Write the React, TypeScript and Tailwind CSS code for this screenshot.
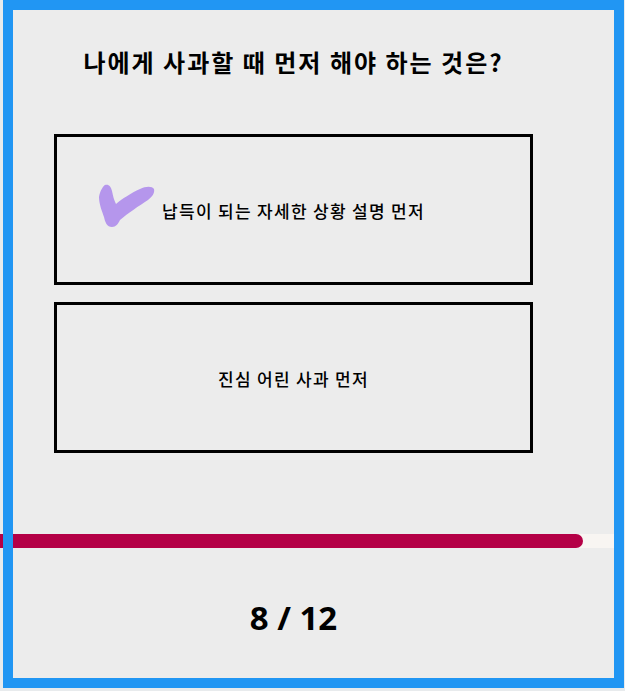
import React from "react";

const options = [
  { id: 1, label: "납득이 되는 자세한 상황 설명 먼저", checked: true },
  { id: 2, label: "진심 어린 사과 먼저", checked: false },
];

function BrushCheck() {
  return (
    <svg width="60" height="46" viewBox="0 0 60 46" className="absolute left-[40px] top-[46px]">
      <path
        d="M2 14 C3 8 6 3 8 2 C12 1 14 4 15 8 C16 13 17 17 19 21 C25 16 34 10 43 6 C49 3 55 3 57 6 C58 10 55 14 51 17 C42 23 31 30 23 37 C21 41 19 44 15 44 C10 44 8 39 7 34 C5 28 2 21 2 14 Z"
        fill="#b596ec"
      />
    </svg>
  );
}

export default function App() {
  return (
    <div className="min-h-screen bg-[#e8ebed] pl-[3px] pr-[1px] pb-[3px] font-['Noto_Sans_CJK_KR','Noto_Sans',sans-serif] text-black">
      <div className="relative h-[688px] bg-[#ececec]">
        <div className="pt-[10px] pl-[10px]">
          {/* question */}
          <div className="ml-[41px] mt-[36px] w-[479px] text-center text-[24px] font-bold leading-[32px] tracking-[2px]">
            나에게 사과할 때 먼저 해야 하는 것은?
          </div>

          {/* options */}
          <div className="ml-[41px] mt-[56px] flex w-[479px] flex-col gap-[17px]">
            {options.map((opt) => (
              <button
                key={opt.id}
                className="relative flex h-[151px] items-center justify-center border-[3px] border-black text-[17px] font-medium tracking-[1.3px]"
              >
                {opt.checked && <BrushCheck />}
                <span className="pt-[2px]">{opt.label}</span>
              </button>
            ))}
          </div>

          {/* progress */}
          <div className="-ml-[13px] mt-[81px] h-[14px] w-[614px] bg-[#f8f5f2]">
            <div className="h-full w-[583px] rounded-r-full bg-[#b40046]" />
          </div>

          <div className="ml-[41px] mt-[50px] w-[479px] text-center font-['Noto_Sans',sans-serif] text-[33px] font-bold leading-[40px]">
            8 / 12
          </div>
        </div>

        {/* frame */}
        <div className="pointer-events-none absolute inset-0 border-[10px] border-[#2196f3]" />
      </div>
    </div>
  );
}
